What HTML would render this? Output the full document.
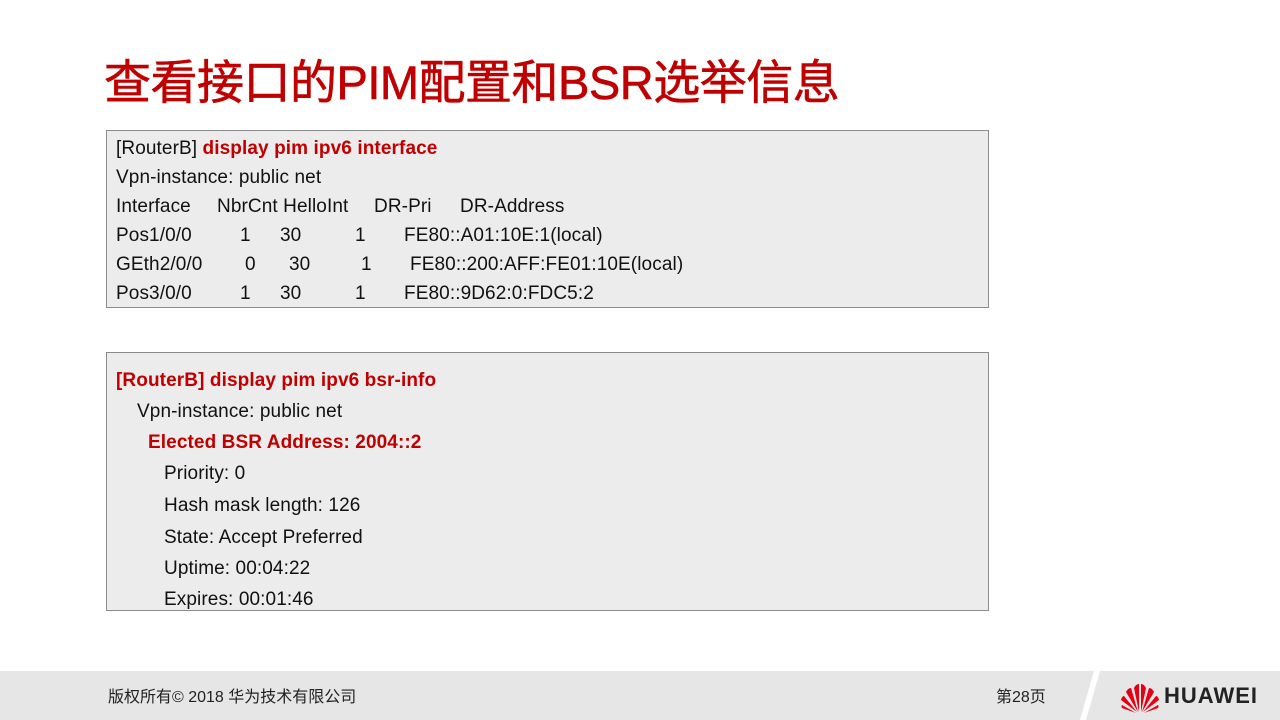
<!DOCTYPE html>
<html><head><meta charset="utf-8"><style>
body{margin:0;width:1280px;height:720px;background:#fff;position:relative;overflow:hidden;font-family:"Liberation Sans","Noto Sans CJK SC",sans-serif;}
.t{position:absolute;left:104px;top:44px;font-size:47px;color:#c00000;white-space:nowrap;letter-spacing:-0.5px;-webkit-text-stroke:0.6px #c00000}
.box{position:absolute;left:106px;width:881px;background:#ececec;border:1px solid #8c8c8c}
.l{position:absolute;font-size:19px;letter-spacing:0.1px;color:#111;white-space:nowrap;line-height:22px;margin-top:2px}
.r{color:#c00000;font-weight:bold}
.foot{position:absolute;left:0;top:671px;width:1280px;height:49px;background:#e6e6e6}
</style></head><body>
<div class="t">查看接口的PIM配置和BSR选举信息</div>
<div class="box" style="top:130px;height:176px"></div>
<div class="l" style="left:116px;top:136px">[RouterB] <span class="r">display pim ipv6 interface</span></div>
<div class="l" style="left:116px;top:165px">Vpn-instance: public net</div>
<div class="l" style="left:116px;top:194px">Interface</div><div class="l" style="left:217px;top:194px">NbrCnt HelloInt</div><div class="l" style="left:374px;top:194px">DR-Pri</div><div class="l" style="left:460px;top:194px">DR-Address</div>
<div class="l" style="left:116px;top:223px">Pos1/0/0</div><div class="l" style="left:240px;top:223px">1</div><div class="l" style="left:280px;top:223px">30</div><div class="l" style="left:355px;top:223px">1</div><div class="l" style="left:404px;top:223px">FE80::A01:10E:1(local)</div>
<div class="l" style="left:116px;top:252px">GEth2/0/0</div><div class="l" style="left:245px;top:252px">0</div><div class="l" style="left:289px;top:252px">30</div><div class="l" style="left:361px;top:252px">1</div><div class="l" style="left:410px;top:252px">FE80::200:AFF:FE01:10E(local)</div>
<div class="l" style="left:116px;top:281px">Pos3/0/0</div><div class="l" style="left:240px;top:281px">1</div><div class="l" style="left:280px;top:281px">30</div><div class="l" style="left:355px;top:281px">1</div><div class="l" style="left:404px;top:281px">FE80::9D62:0:FDC5:2</div>
<div class="box" style="top:352px;height:257px"></div>
<div class="l r" style="left:116px;top:368px">[RouterB] display pim ipv6 bsr-info</div>
<div class="l" style="left:137px;top:399px">Vpn-instance: public net</div>
<div class="l r" style="left:148px;top:430px">Elected BSR Address: 2004::2</div>
<div class="l" style="left:164px;top:461px">Priority: 0</div>
<div class="l" style="left:164px;top:493px">Hash mask length: 126</div>
<div class="l" style="left:164px;top:525px">State: Accept Preferred</div>
<div class="l" style="left:164px;top:556px">Uptime: 00:04:22</div>
<div class="l" style="left:164px;top:587px">Expires: 00:01:46</div>
<div class="foot"></div>
<svg style="position:absolute;left:1080px;top:671px" width="200" height="49"><polygon points="14,0 20,0 6,49 0,49" fill="#fff"/></svg>
<div class="l" style="left:108px;top:685px;font-size:16px;letter-spacing:0;color:#222">版权所有© 2018 华为技术有限公司</div>
<div class="l" style="left:996px;top:685px;font-size:16px;letter-spacing:0;color:#222">第28页</div>
<svg style="position:absolute;left:1120px;top:682px" width="40" height="32" viewBox="0 0 40 32">
<g fill="#e60012">
<path d="M19 30 L14 6 Q16 2 19 2 Z"/><path d="M21 30 L26 6 Q24 2 21 2 Z"/>
<path d="M18 30 L6 10 Q8 6 11 6 Z"/><path d="M22 30 L34 10 Q32 6 29 6 Z"/>
<path d="M17 30 L1 18 Q2 14 4 14 Z"/><path d="M23 30 L39 18 Q38 14 36 14 Z"/>
<path d="M16 31 L2 26 Q1 24 2 23 Z"/><path d="M24 31 L38 26 Q39 24 38 23 Z"/>
</g></svg>
<div class="l" style="left:1164px;top:683px;font-size:22px;font-weight:bold;color:#222;letter-spacing:1px">HUAWEI</div>
</body></html>
